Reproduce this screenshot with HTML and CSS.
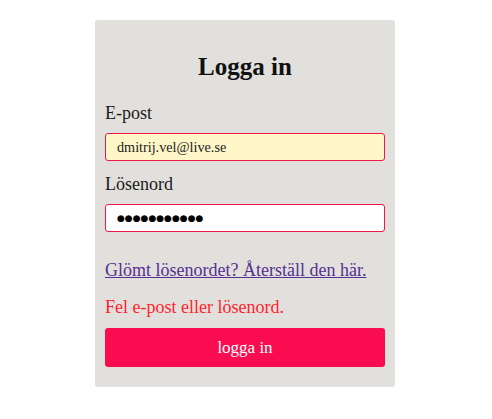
FILE: index.html
```html
<!DOCTYPE html>
<html lang="sv">
<head>
<meta charset="utf-8">
<link rel="stylesheet" href="styles.css">
</head>
<body>
<div class="page">
  <form class="card">
    <h1 class="title">Logga in</h1>
    <label class="label label-email">E-post</label>
    <div class="input input-email">dmitrij.vel@live.se</div>
    <label class="label label-pass">Lösenord</label>
    <div class="input input-pass">●●●●●●●●●●●</div>
    <a class="link" href="#">Glömt lösenordet? Återställ den här.</a>
    <p class="error">Fel e-post eller lösenord.</p>
    <div class="button">logga in</div>
  </form>
</div>
</body>
</html>
```
FILE: styles.css
```css
html, body { margin: 0; padding: 0; background: #ffffff; }
body { font-family: "Liberation Serif", serif; color: #111; }
.page { display: flex; justify-content: center; padding: 20px 2px 0 0; }
.card {
  width: 300px; box-sizing: border-box;
  background: #e2e0dd; border-radius: 3px;
  padding: 32px 10px 20px;
  display: flex; flex-direction: column;
}
.title { margin: 0; height: 30px; line-height: 30px; font-size: 25px; font-weight: bold; text-align: center; color: #111; }
.label { display: block; height: 20px; line-height: 20px; font-size: 18px; color: #1a1a1a; }
.label-email { margin-top: 21px; }
.label-pass { margin-top: 13px; }
.input {
  box-sizing: border-box; height: 28px; margin-top: 10px;
  border: 1px solid #f2164f; border-radius: 3px;
  padding: 0 11px; display: flex; align-items: center;
}
.input-email { background: #fff7c7; font-size: 14.2px; color: #222; }
.input-pass { background: #ffffff; font-family: "DejaVu Sans", sans-serif; font-size: 9px; letter-spacing: 0; color: #000; }
.link { margin-top: 28px; height: 20px; line-height: 20px; font-size: 18px; color: #55308f; text-decoration: underline; }
.error { margin: 17px 0 0; height: 20px; line-height: 20px; font-size: 18px; color: #ff1f2f; }
.button {
  margin-top: 11px; height: 39px; border-radius: 3px;
  background: #f90d50; color: #fff; font-size: 17px;
  display: flex; align-items: center; justify-content: center;
}
```
